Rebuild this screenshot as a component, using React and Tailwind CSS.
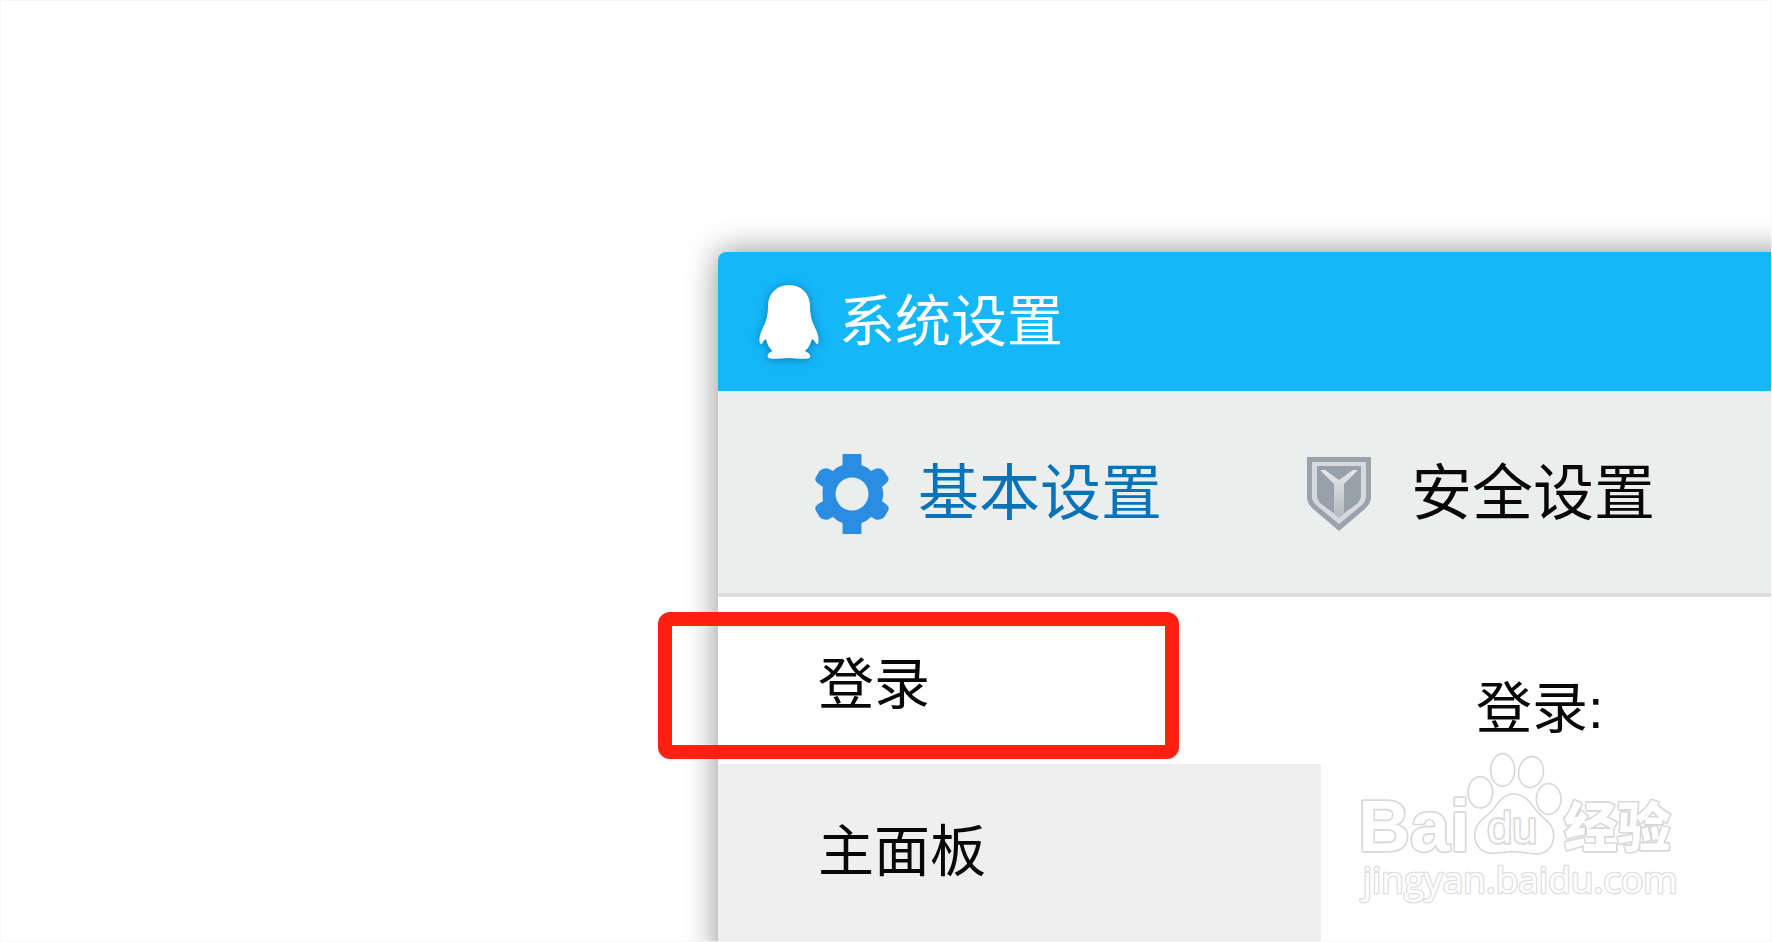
import { useState } from 'react';

const PenguinIcon = () => (
  <svg viewBox="0 0 60 76" className="h-[76px] w-[60px] shrink-0 overflow-visible drop-shadow-[0_1px_4px_rgba(0,60,110,0.5)]" fill="#ffffff" aria-hidden="true">
    <path d="M30 1C17 1 9.500 10 9 21C9 27 8.500 32 6.500 38C3 46 0 51 0.500 57C1 61 3 61 4.500 57L7 55C8 60 10 64 13.500 67C9 69 8 71 9 73.500C10 75 16 75 22 74.500Q30 73.500 37 74.500C43 75 50 75 51 73.500C52 71 50 69 46 67C50 64 51.500 60 53 55L55.500 57C57.500 61 59.500 61 59.500 57C60 51 57 46 53.500 38C51.500 32 51 27 51 21C50.500 10 43 1 30 1Z" />
  </svg>
);

const GearIcon = () => (
  <svg viewBox="0 0 74 80" className="h-20 w-[74px] shrink-0" fill="#2a8de2" aria-hidden="true">
    <path
      fillRule="evenodd"
      d="M27.500 0H46.500V11Q52 13 56 17L61 14.500Q66 13.500 69 17L73.500 24Q74 27 71.500 29L67 33Q69.500 40 67 47L71.500 50.500Q74.500 53 73.500 56L69.500 63Q66 66.500 61 65.500L56 63Q52 67 46.500 69V80H27.500V69Q22 67 18 63L13 65.500Q8 66.500 4.500 63L0.500 56Q-0.500 53 2.500 50.500L8 47Q7 40 8 33L2.500 29Q-0.500 27 0.500 24L4.500 17Q8 13.500 13 14.500L18 17Q22 13 27.500 11ZM37 23.500A16.500 16.500 0 1 0 37 56.500A16.500 16.500 0 1 0 37 23.500Z"
    />
  </svg>
);

const ShieldIcon = () => (
  <svg viewBox="0 0 66 76" className="h-[76px] w-[66px] shrink-0" aria-hidden="true">
    <defs>
      <linearGradient id="stem" x1="0" y1="0" x2="0" y2="1">
        <stop offset="0" stopColor="#e6e8ea" />
        <stop offset="1" stopColor="#b3b9bf" />
      </linearGradient>
    </defs>
    <path d="M1 1H65V43Q64 48 60 52L33 75L6 52Q2 48 1 43Z" fill="#9aa3ac" />
    <path d="M6 6H60V42Q59 46 56 49L33 68L10 49Q7 46 6 42Z" fill="#d6dadd" />
    <path d="M11 10H55V41Q54 44 52 47L33 61L14 47Q12 44 11 41Z" fill="#98a1aa" />
    <path d="M14 14L19 14L33 24L47 14L52 14L38 28V58L33 62L28 58V28Z" fill="url(#stem)" />
  </svg>
);

const Watermark = () => (
  <svg
    viewBox="50 270 972 474"
    className="pointer-events-none absolute right-[91px] bottom-[33px] h-[158px] w-[324px]"
    fill="#ffffff"
    stroke="#d8d8d8"
    strokeWidth="5"
    strokeLinejoin="round"
  >
    <ellipse cx="423" cy="397" rx="37" ry="47" />
    <ellipse cx="490" cy="330" rx="36" ry="49" />
    <ellipse cx="575" cy="336" rx="37" ry="47" transform="rotate(10 575 336)" />
    <ellipse cx="628" cy="417" rx="37" ry="46" />
    <path d="M524 402C493 402 478 425 462 448C445 470 406 485 406 525C406 560 430 580 462 580C485 580 500 575 524 575C550 575 565 582 595 582C627 580 643 555 643 525C643 488 610 478 590 450C570 425 555 402 524 402Z" />
    <g strokeWidth="10" style={{ paintOrder: 'stroke' }}>
      <text x="57" y="573" fontSize="215" fontWeight="700" className="font-['Liberation_Sans',sans-serif]">Bai</text>
      <text x="444" y="550" fontSize="134" className="font-['Liberation_Sans',sans-serif]">du</text>
      <text x="674" y="562" fontSize="160" fontWeight="900" className="font-['Noto_Sans_CJK_SC',sans-serif]">经验</text>
      <text x="70" y="700" fontSize="111" stroke="#dedede" strokeWidth="8" className="font-['Open_Sans',sans-serif]">jingyan.baidu.com</text>
    </g>
  </svg>
);

const tabs = [
  { id: 'basic', label: '基本设置', icon: <GearIcon />, gap: 'gap-[29px]' },
  { id: 'security', label: '安全设置', icon: <ShieldIcon />, gap: 'gap-[39px]' }
];

const menu = ['登录', '主面板'];

const App = () => {
  const [tab, setTab] = useState('basic');
  const [section, setSection] = useState('登录');

  return (
    <div className="relative flex h-screen overflow-hidden border border-[#f7f7f7] bg-white pt-[251px] pl-[717px] font-['Liberation_Sans','Noto_Sans_CJK_SC',sans-serif] text-[#080808]">
      {/* Settings window, runs past the right and bottom edges */}
      <main className="-mr-10 -mb-10 flex flex-1 flex-col rounded-tl-lg bg-white shadow-[0_0_32px_rgba(0,0,0,0.45)]">
        <header className="flex h-[139px] shrink-0 items-center gap-5 rounded-tl-lg bg-[#14b7f8] pl-[41px] text-white">
          <PenguinIcon />
          <h1 className="text-[56px] leading-none">系统设置</h1>
        </header>

        <nav className="flex h-[206px] shrink-0 items-center gap-[144px] border-b-4 border-[#dcdedd] bg-[#eceeed] pt-1 pl-[97px]">
          {tabs.map((item) => (
            <button
              key={item.id}
              type="button"
              onClick={() => setTab(item.id)}
              className={`flex items-center whitespace-nowrap text-[61px] leading-none ${item.gap} ${tab === item.id ? 'text-[#0873b8]' : ''}`}
            >
              {item.icon}
              {item.label}
            </button>
          ))}
        </nav>

        <div className="flex flex-1">
          <aside className="w-[603px] shrink-0 bg-[#efefef]">
            {menu.map((label) => (
              <div key={label} className="relative">
                <button
                  type="button"
                  onClick={() => setSection(label)}
                  className={`block h-[167px] w-full pt-2 pl-[100px] text-left text-[56px] leading-none ${section === label ? 'bg-white' : ''}`}
                >
                  {label}
                </button>
                {/* Highlight frame round the current entry */}
                {section === label && (
                  <div className="pointer-events-none absolute top-[15px] right-[142px] bottom-[5px] -left-[60px] rounded-xl border-14 border-[#ff2012]"></div>
                )}
              </div>
            ))}
          </aside>

          <section className="flex-1 pt-[84px] pl-[155px]">
            <h2 className="text-[56px] leading-none">{section}:</h2>
          </section>
        </div>
      </main>

      <Watermark />
    </div>
  );
};

export default App;
